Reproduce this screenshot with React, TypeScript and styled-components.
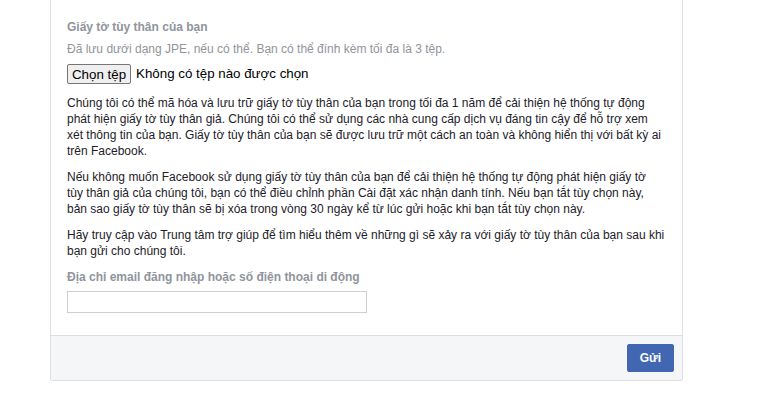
import React from "react";
import styled, { createGlobalStyle } from "styled-components";

const GlobalStyle = createGlobalStyle`
  html, body { margin: 0; padding: 0; background: #ffffff; }
  body { font-family: "Liberation Sans", Arial, Helvetica, sans-serif; }
`;

const Page = styled.div`
  padding-left: 50px;
`;

const Card = styled.div`
  width: 633px;
  box-sizing: border-box;
  background: #ffffff;
  border: 1px solid #dddfe2;
  border-top: none;
  border-radius: 0 0 3px 3px;
`;

const Body = styled.div`
  padding: 19px 16px 22px 16px;
  font-size: 12px;
  line-height: 16px;
  color: #1d2129;
`;

const Title = styled.div<{ $top?: number }>`
  font-weight: bold;
  color: #90949c;
  margin-top: ${(p) => p.$top ?? 0}px;
`;

const Hint = styled.div`
  color: #90949c;
  margin-top: 6px;
`;

const FileRow = styled.div`
  display: flex;
  align-items: center;
  gap: 5px;
  margin-top: 7px;
  height: 20px;
  font-size: 13.33px;
  color: #000;
`;

const FileButton = styled.button`
  box-sizing: border-box;
  height: 20px;
  width: 64px;
  padding: 0;
  font-family: "Liberation Sans", Arial, sans-serif;
  font-size: 13.33px;
  color: #000;
  background: #efefef;
  border: 1px solid #767676;
  border-radius: 2px;
`;

const Para = styled.p<{ $top: number; $max?: number }>`
  margin: ${(p) => p.$top}px 0 0 0;
  max-width: ${(p) => p.$max ?? 598}px;
`;

const TextInput = styled.input`
  display: block;
  box-sizing: border-box;
  width: 300px;
  height: 22px;
  margin-top: 6px;
  border: 1px solid #ccd0d5;
  border-radius: 0;
  padding: 3px;
  font-family: inherit;
  font-size: 12px;
  outline: none;
`;

const Footer = styled.div`
  display: flex;
  justify-content: flex-end;
  padding: 8px;
  background: #f5f6f7;
  border-top: 1px solid #dddfe2;
  border-radius: 0 0 3px 3px;
`;

const SubmitButton = styled.button`
  box-sizing: border-box;
  height: 28px;
  padding: 0 12px;
  font-family: "Liberation Sans", Arial, sans-serif;
  font-size: 12px;
  font-weight: bold;
  color: #ffffff;
  background: #4267b2;
  border: 1px solid #4267b2;
  border-radius: 2px;
`;

export default function App() {
  return (
    <>
      <GlobalStyle />
      <Page>
        <Card>
          <Body>
            <Title>Giấy tờ tùy thân của bạn</Title>
            <Hint>Đã lưu dưới dạng JPE, nếu có thể. Bạn có thể đính kèm tối đa là 3 tệp.</Hint>
            <FileRow>
              <FileButton type="button">Chọn tệp</FileButton>
              <span>Không có tệp nào được chọn</span>
            </FileRow>
            <Para $top={11}>
              Chúng tôi có thể mã hóa và lưu trữ giấy tờ tùy thân của bạn trong tối đa 1 năm để cải thiện hệ thống tự động phát hiện giấy tờ tùy thân giả. Chúng tôi có thể sử dụng các nhà cung cấp dịch vụ đáng tin cậy để hỗ trợ xem xét thông tin của bạn. Giấy tờ tùy thân của bạn sẽ được lưu trữ một cách an toàn và không hiển thị với bất kỳ ai trên Facebook.
            </Para>
            <Para $top={10} $max={596}>
              Nếu không muốn Facebook sử dụng giấy tờ tùy thân của bạn để cải thiện hệ thống tự động phát hiện giấy tờ tùy thân giả của chúng tôi, bạn có thể điều chỉnh phần Cài đặt xác nhận danh tính. Nếu bạn tắt tùy chọn này, bản sao giấy tờ tùy thân sẽ bị xóa trong vòng 30 ngày kể từ lúc gửi hoặc khi bạn tắt tùy chọn này.
            </Para>
            <Para $top={10}>
              Hãy truy cập vào Trung tâm trợ giúp để tìm hiểu thêm về những gì sẽ xảy ra với giấy tờ tùy thân của bạn sau khi bạn gửi cho chúng tôi.
            </Para>
            <Title $top={10}>Địa chỉ email đăng nhập hoặc số điện thoại di động</Title>
            <TextInput type="text" />
          </Body>
          <Footer>
            <SubmitButton type="button">Gửi</SubmitButton>
          </Footer>
        </Card>
      </Page>
    </>
  );
}
